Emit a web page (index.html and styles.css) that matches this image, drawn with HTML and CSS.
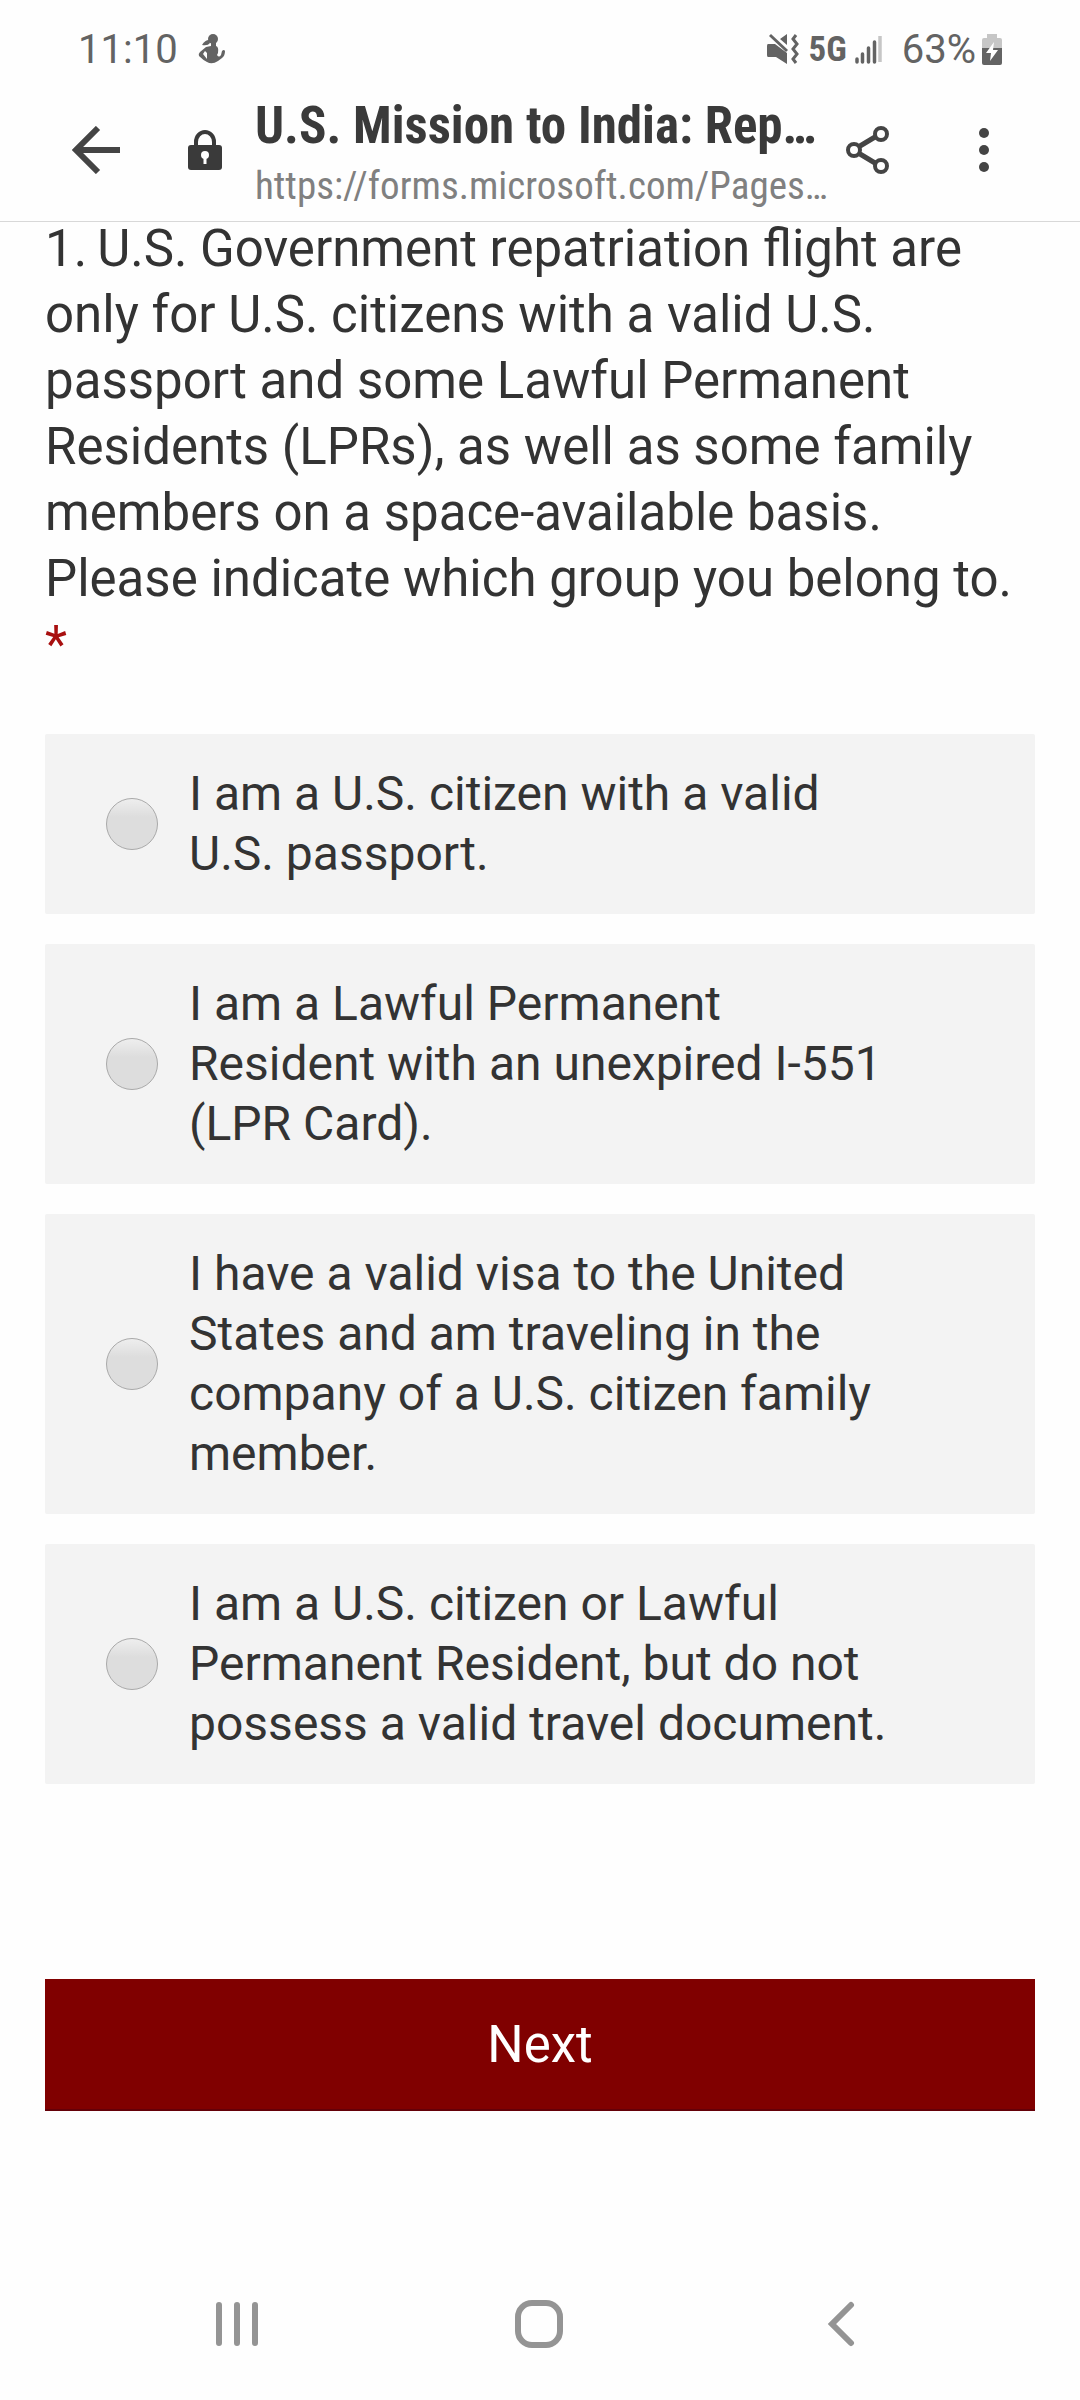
FILE: index.html
```html
<!DOCTYPE html>
<html lang="en">
<head>
    <meta charset="utf-8">
    <meta name="viewport" content="width=device-width, initial-scale=1">
    <title>U.S. Mission to India: Repatriation</title>
    <link rel="stylesheet" href="styles.css">
</head>

<body>

<div class="status">
    <span class="clock">11:10</span>
    <svg class="person" width="28" height="32" viewBox="0 0 28 32">
        <circle cx="15" cy="6" r="5" fill="#636363"/>
        <path d="M11 7 Q7 7 4 12 Q10 13 12 10 Z" fill="#636363"/>
        <path d="M13 10 H18 V13 Q21 14 20 20 L19 22 Q21 25 23 22 L24 18 Q26 16 27 18 Q27 23 24 25 L20 28 Q14 32 9 29 Q5 27 1 23 Q0 21 2 19 L8 14 L13 13 Z M7 18 L5 21 L9 26 L9 20 Z" fill="#636363" fill-rule="evenodd"/>
    </svg>
    <div class="status-right">
        <svg width="32" height="32" viewBox="0 0 32 32">
            <path d="M1 11 H8 L20 20 V31 L9 24 H1 Q0 24 0 22 V13 Q0 11 1 11 Z M13 6 L20 1 V12 Z" fill="#636363"/>
            <path d="M3 2 L20 18" stroke="#636363" stroke-width="3" fill="none"/>
            <path d="M29 2 L26 6 L30 11 L26 16 L30 21 L26 26 L29 30" stroke="#636363" stroke-width="3" fill="none"/>
        </svg>
        <span class="network">5G</span>
        <svg width="27" height="30" viewBox="0 0 27 30">
            <path d="M2 25 V28 M7.5 20 V28 M13.5 14 V28 M19.5 8 V28" stroke="#636363" stroke-width="3.5" stroke-linecap="round"/>
            <path d="M25 2 V28" stroke="#c6c6c6" stroke-width="3.5"/>
        </svg>
        <span class="percent">63%</span>
        <svg width="20" height="32" viewBox="0 0 20 32">
            <path d="M5 1 H15 V5 H18 Q20 5 20 7 V15 H0 V7 Q0 5 2 5 H5 Z" fill="#c6c6c6"/>
            <path d="M0 15 H20 V30 Q20 32 18 32 H2 Q0 32 0 30 Z" fill="#636363"/>
            <path d="M12 9 L4 20 H9 L8 28 L16 17 H11 Z" fill="#fff"/>
        </svg>
    </div>
</div>

<header class="toolbar">
    <button class="icon-btn" type="button" aria-label="Back">
        <svg width="48" height="48" viewBox="0 0 48 48">
            <path d="M26 2 L4 24 L26 46 M4 24 H48" fill="none" stroke="#444" stroke-width="6"/>
        </svg>
    </button>
    <svg class="lock" width="34" height="40" viewBox="0 0 34 40">
        <path d="M8 16 V12 A9 10 0 0 1 26 12 V16" fill="none" stroke="#3a3a3a" stroke-width="4"/>
        <rect x="0" y="15" width="34" height="25" rx="3" fill="#3a3a3a"/>
        <circle cx="17" cy="25" r="4" fill="#fff"/>
        <path d="M17 25 V34" stroke="#fff" stroke-width="3"/>
    </svg>
    <div class="page">
        <div class="page-title">U.S. Mission to India: Rep…</div>
        <div class="page-url">https://forms.microsoft.com/Pages…</div>
    </div>
    <button class="icon-btn share" type="button" aria-label="Share">
        <svg width="44" height="48" viewBox="0 0 44 48">
            <g fill="none" stroke="#444" stroke-width="4">
                <path d="M14 20 L29 11 M14 28 L29 37" stroke-width="5"/>
                <circle cx="8" cy="24" r="6"/>
                <circle cx="35" cy="8" r="6"/>
                <circle cx="35" cy="40" r="6"/>
            </g>
        </svg>
    </button>
    <button class="icon-btn" type="button" aria-label="More options">
        <svg width="10" height="44" viewBox="0 0 10 44">
            <g fill="#444">
                <circle cx="5" cy="5" r="5"/>
                <circle cx="5" cy="22" r="5"/>
                <circle cx="5" cy="39" r="5"/>
            </g>
        </svg>
    </button>
</header>

<main>
    <form>
        <p class="question" id="question"><span class="number">1.</span>U.S. Government repatriation flight are only for U.S. citizens with a valid U.S. passport and some Lawful Permanent Residents (LPRs), as well as some family members on a space-available basis. Please indicate which group you belong to. <span class="required">*</span></p>

        <div class="choices" role="radiogroup" aria-labelledby="question">
            <label class="choice">
                <input type="radio" name="group" value="citizen">
                <span>I am a U.S. citizen with a valid U.S. passport.</span>
            </label>
            <label class="choice">
                <input type="radio" name="group" value="lpr">
                <span>I am a Lawful Permanent Resident with an unexpired I-551 (LPR Card).</span>
            </label>
            <label class="choice">
                <input type="radio" name="group" value="visa">
                <span>I have a valid visa to the United States and am traveling in the company of a U.S. citizen family member.</span>
            </label>
            <label class="choice">
                <input type="radio" name="group" value="no-document">
                <span>I am a U.S. citizen or Lawful Permanent Resident, but do not possess a valid travel document.</span>
            </label>
        </div>

        <button class="next" type="button">Next</button>
    </form>
</main>

<nav class="navbar">
    <button type="button" aria-label="Recent apps">
        <svg width="44" height="46" viewBox="0 0 44 46">
            <path d="M4 4 V42 M22 4 V42 M40 4 V42" stroke="#949494" stroke-width="6" stroke-linecap="round"/>
        </svg>
    </button>
    <button type="button" aria-label="Home">
        <svg width="48" height="48" viewBox="0 0 48 48">
            <rect x="3" y="3" width="42" height="42" rx="14" fill="none" stroke="#949494" stroke-width="6"/>
        </svg>
    </button>
    <button type="button" aria-label="Back">
        <svg width="28" height="46" viewBox="0 0 28 46">
            <path d="M24 4 L5 23 L24 42" fill="none" stroke="#949494" stroke-width="6" stroke-linecap="round"/>
        </svg>
    </button>
</nav>

</body>
</html>
```
FILE: styles.css
```css
* {
    box-sizing: border-box;
}

body {
    display: flex;
    flex-direction: column;
    min-height: 100vh;
    margin: 0;
    background-color: #fefefe;
    color: #333;
    font-family: Roboto, "Liberation Sans", sans-serif;
}

button {
    border: 0;
    padding: 0;
    background: none;
    font-family: inherit;
}

svg {
    display: block;
    flex: none;
}

/* phone status bar */
.status {
    display: flex;
    align-items: center;
    height: 98px;
    padding: 0 78px;
    color: #636363;
    font-size: 40px;
}
.person {
    margin-left: 20px;
}
.status-right {
    display: flex;
    align-items: center;
    margin-left: auto;
}
.network {
    margin: 0 8px 0 10px;
    font-family: "Roboto Condensed", Roboto, "Liberation Sans", sans-serif;
    font-size: 35px;
    font-weight: bold;
}
.percent {
    margin: 0 6px 0 20px;
}

/* browser toolbar */
.toolbar {
    display: flex;
    align-items: center;
    height: 124px;
    padding: 0 64px 20px 64px;
    border-bottom: 1px solid #d8d8d8;
    background-color: #fefefe;
    position: relative;
    z-index: 1;
}
.icon-btn {
    display: flex;
    justify-content: center;
    width: 64px;
}
.lock {
    margin: 0 33px 0 60px;
}
.page {
    flex: 1;
    min-width: 0;
    padding-top: 12px;
    white-space: nowrap;
    font-family: "Roboto Condensed", Roboto, "Liberation Sans", sans-serif;
}
.page-title {
    color: #3a3a3a;
    font-size: 51px;
    line-height: 60px;
    font-weight: bold;
}
.page-url {
    color: #808080;
    font-size: 39px;
    line-height: 60px;
}
.share {
    margin-right: 52px;
}

/* form */
main {
    flex: 1;
    padding: 0 45px;
}
.question {
    margin: -6px 0 56px;
    font-size: 51px;
    line-height: 66px;
}
.number {
    margin-right: 10px;
}
.required {
    color: #a80f0f;
}
.choices {
    display: flex;
    flex-direction: column;
    gap: 30px;
}
.choice {
    display: flex;
    align-items: center;
    gap: 31px;
    padding: 30px 135px 30px 61px;
    border-radius: 2px;
    background-color: #f3f3f3;
    font-size: 48px;
    line-height: 60px;
}
.choice input {
    appearance: none;
    flex: none;
    width: 52px;
    height: 52px;
    margin: 0;
    border: 1px solid #a9a9a9;
    border-radius: 50%;
    background: linear-gradient(#eee, #ddd 36%, #ddd);
}
.choice input:checked {
    background: radial-gradient(#444 36%, #ddd 40%);
}
.next {
    width: 100%;
    height: 132px;
    margin-top: 195px;
    border-bottom: 2px solid #640008;
    background-color: #800000;
    color: #fff;
    font-size: 51px;
}

/* phone navigation */
.navbar {
    display: grid;
    grid-template-columns: repeat(3, 1fr);
    height: 152px;
    padding: 0 88px 0 86px;
}
.navbar button {
    display: flex;
    align-items: center;
    justify-content: center;
}
```
